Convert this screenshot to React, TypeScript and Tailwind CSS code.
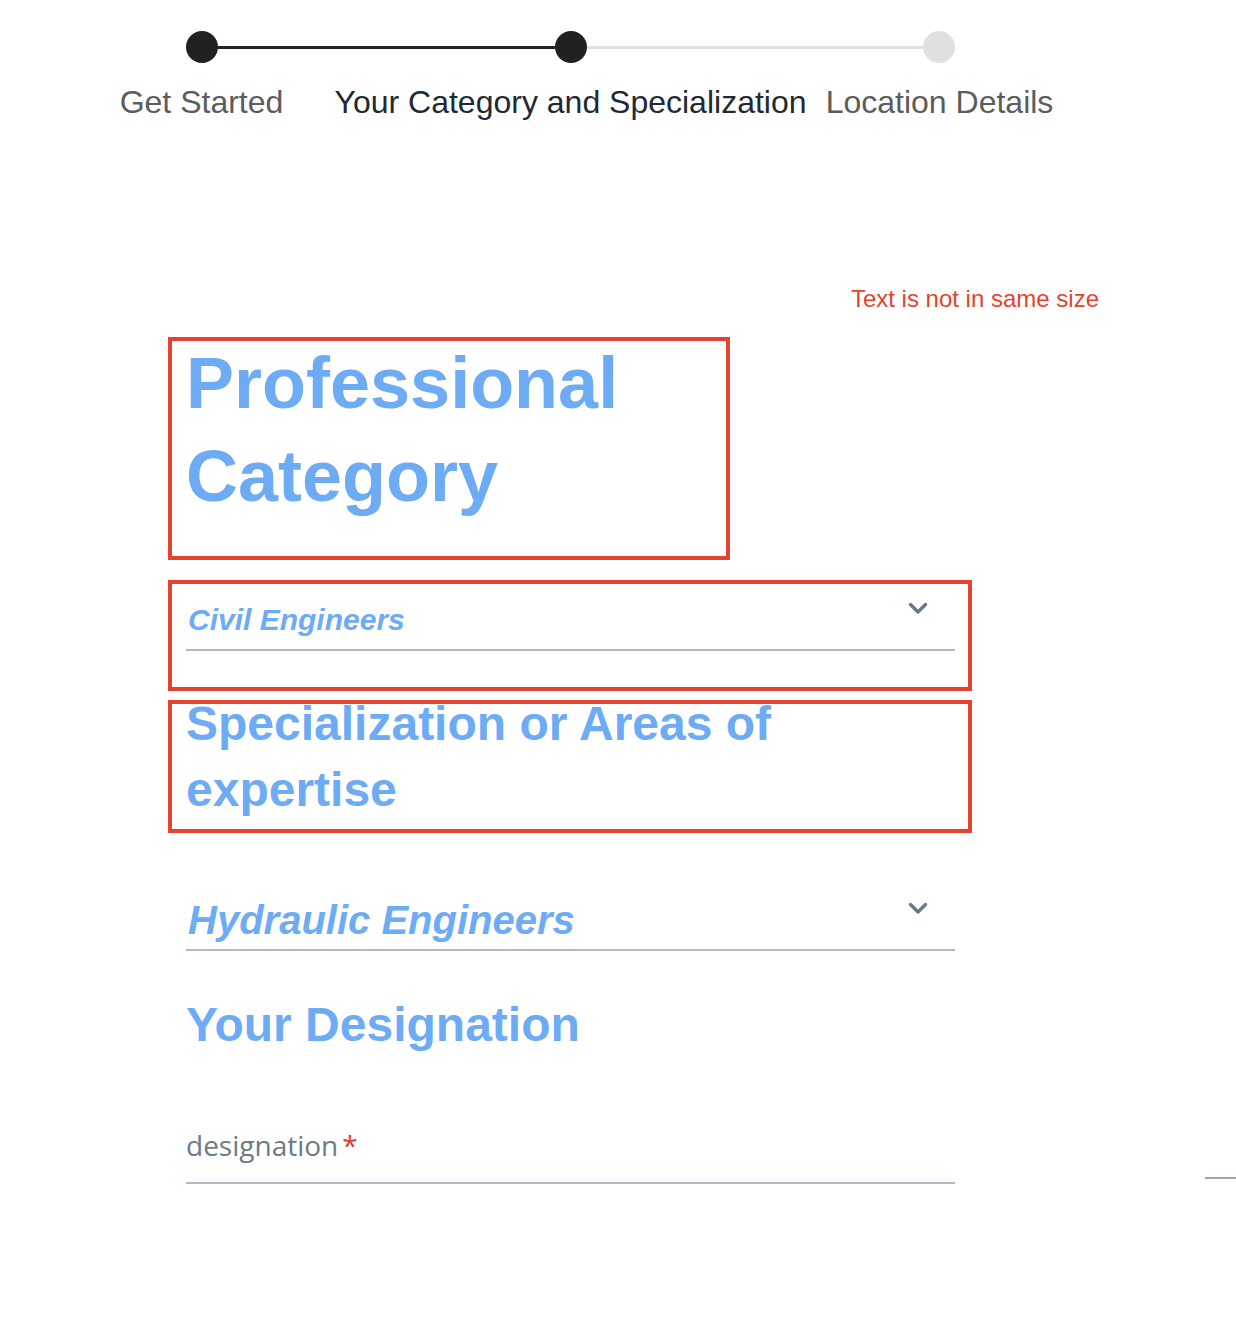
import React from "react";

const Chevron = () => (
  <svg width="22" height="14" viewBox="0 0 22 14" fill="none" className="shrink-0">
    <path d="M3.5 3.5 L11 11 L18.5 3.5" stroke="#6a7a85" strokeWidth="3.4" strokeLinecap="round" strokeLinejoin="round" />
  </svg>
);

export default function App() {
  return (
    <div className="relative w-[1236px] h-[1344px] bg-white overflow-hidden" style={{ fontFamily: '"Liberation Sans", Arial, sans-serif' }}>
      {/* Stepper */}
      <div className="pt-[31px]">
        <div className="flex items-center ml-[186px]">
          <div className="w-8 h-8 rounded-full bg-[#212121]" />
          <div className="h-[3px] w-[337px] bg-[#212121]" />
          <div className="w-8 h-8 rounded-full bg-[#212121]" />
          <div className="h-[3px] w-[336px] bg-[#e0e0e0]" />
          <div className="w-8 h-8 rounded-full bg-[#e0e0e0]" />
        </div>
        <div className="flex ml-[17px] mt-[21px] text-[32px] leading-[36px]">
          <div className="w-[369px] flex flex-col items-center">
            <span className="whitespace-nowrap text-[#5c5c5c]">Get Started</span>
          </div>
          <div className="w-[369px] flex flex-col items-center">
            <span className="whitespace-nowrap text-[#1e2a33]">Your Category and Specialization</span>
          </div>
          <div className="w-[369px] flex flex-col items-center">
            <span className="whitespace-nowrap text-[#5c5c5c]">Location Details</span>
          </div>
        </div>
      </div>

      {/* Annotation note */}
      <div className="w-[1099px] mt-[165px] text-right text-[24px] leading-[28px] text-[#e5432d]">
        Text is not in same size
      </div>

      {/* Form */}
      <div className="ml-[186px] w-[769px] mt-[24px] text-[#6eabf5]">
        <h1 className="text-[72px] leading-[93px] font-bold">
          Professional
          <br />
          Category
        </h1>

        <div className="mt-[79px] flex items-start justify-between border-b-2 border-[#aebbc4] pb-[11px] pr-[26px]">
          <span className="text-[30px] leading-[36px] font-bold italic pl-[2px]">Civil Engineers</span>
          <div className="mt-[-1px]">
            <Chevron />
          </div>
        </div>

        <h2 className="mt-[40px] text-[48px] leading-[66px] font-bold">
          Specialization or Areas of
          <br />
          expertise
        </h2>

        <div className="mt-[74px] flex items-start justify-between border-b-2 border-[#aebbc4] pb-[6px] pr-[26px]">
          <span className="text-[40px] leading-[46px] font-bold italic pl-[2px]">Hydraulic Engineers</span>
          <div className="mt-[4px]">
            <Chevron />
          </div>
        </div>

        <h2 className="mt-[41px] text-[48px] leading-[66px] font-bold">Your Designation</h2>

        <div className="mt-[68px] border-b-2 border-[#aebbc4] pb-[18px]">
          <span className="text-[28px] leading-[38px] text-[#6b7b87]" style={{ fontFamily: '"Open Sans", sans-serif' }}>
            designation<span className="text-[#e53935] ml-[4px]">*</span>
          </span>
        </div>
      </div>

      {/* Annotation boxes */}
      <div className="absolute left-[168px] top-[337px] w-[562px] h-[223px] border-4 border-[#e5432d]" />
      <div className="absolute left-[168px] top-[580px] w-[804px] h-[111px] border-4 border-[#e5432d]" />
      <div className="absolute left-[168px] top-[700px] w-[804px] h-[133px] border-4 border-[#e5432d]" />

      {/* stray edge line */}
      <div className="absolute left-[1205px] top-[1177px] w-[31px] h-[2px] bg-[#a3a3b5]" />
    </div>
  );
}
